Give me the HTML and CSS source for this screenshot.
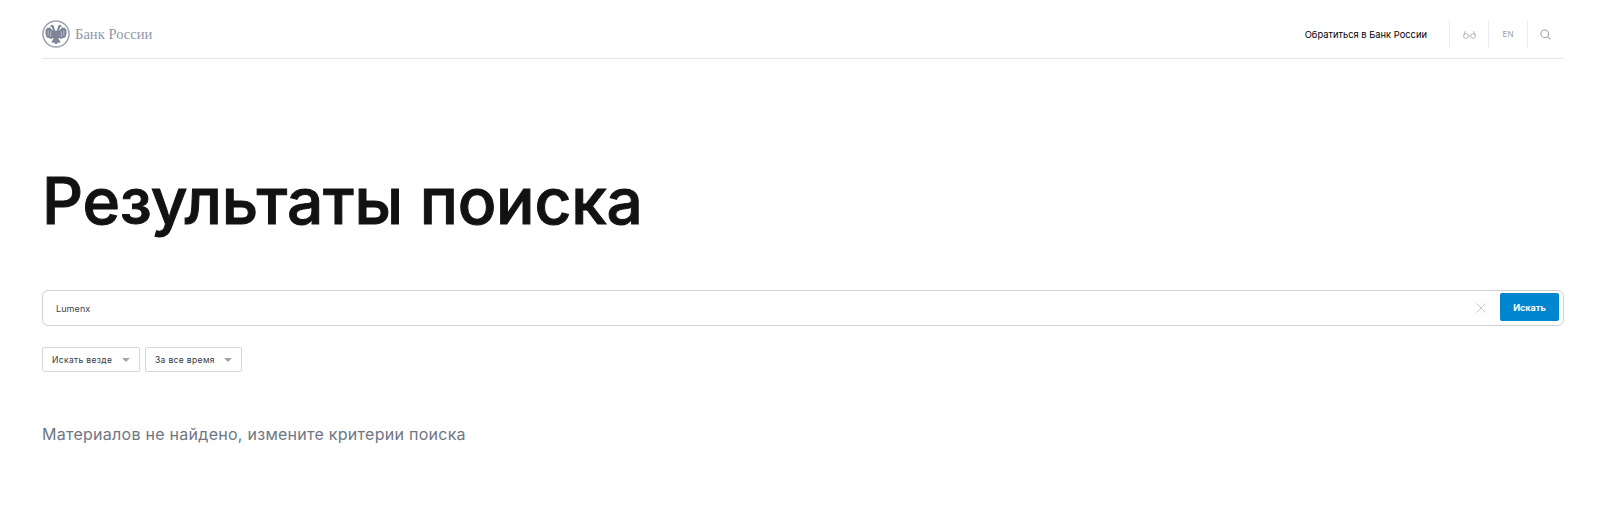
FILE: index.html
```html
<!DOCTYPE html>
<html lang="ru">

<head>
  <meta charset="UTF-8">
  <title>Результаты поиска - Банк России</title>
  <link rel="stylesheet" href="styles.css">
</head>

<body>
  <div class="container">
    <div class="header">
      <a class="logo" href="#">
        <svg class="logo-mark" viewBox="0 0 28 28" width="28" height="28">
          <circle cx="14" cy="14" r="13" fill="#fff" stroke="#a0a5b4" stroke-width="1.6"/>
          <g id="half">
            <path fill="#7f8599" d="M14 11L12.8 10 12.2 7 11.2 5H9.4L8 6.6 9.8 6.9 10.4 8.8 11 11 9.4 9.2 8 7.2 6 8 5.4 7.4 3.6 10 3.4 13.6 4.2 16.4 5.8 18H7.6L9 19.2 10.6 18 11.8 18.6 10.2 20.6 9.4 23 11.4 22.2 12.2 23.4 13 23 14 24.6Z"/>
            <path fill="none" stroke="#fff" stroke-width=".4" d="M6.2 10.4v5.4M8.6 11.4v5.4"/>
          </g>
          <use href="#half" transform="matrix(-1 0 0 1 28 0)"/>
        </svg>
        <span class="logo-text">Банк России</span>
      </a>
      <div class="header-nav">
        <a class="nav-link" href="#">Обратиться в Банк России</a>
        <div class="nav-item">
          <svg viewBox="0 0 13 9" width="13" height="9" fill="none" stroke="#a5a9b1" stroke-width=".8">
            <circle cx="3" cy="6" r="2.4"/>
            <circle cx="10" cy="6" r="2.4"/>
            <path d="M5.4 6h2.2M.7 5.4l1.7-4.4M12.3 5.4l-1.7-4.4"/>
          </svg>
        </div>
        <div class="nav-item nav-lang">EN</div>
        <div class="nav-item nav-last">
          <svg viewBox="0 0 12 12" width="11" height="11" fill="none" stroke="#9a9fa8" stroke-width="1.1">
            <circle cx="5.2" cy="5.2" r="4.2"/>
            <path d="M8.3 8.3l3 3"/>
          </svg>
        </div>
      </div>
    </div>

    <h1 class="page-title">Результаты поиска</h1>

    <div class="search-box">
      <span class="search-value">Lumenx</span>
      <svg class="search-clear" viewBox="0 0 10 10" width="10" height="10" fill="none" stroke="#c4c7cf" stroke-width="1">
        <path d="M.5.5l9 9M9.5.5l-9 9"/>
      </svg>
      <button class="search-btn">Искать</button>
    </div>

    <div class="filters">
      <div class="filter filter-where">Искать везде<span class="arrow"></span></div>
      <div class="filter filter-when">За все время<span class="arrow"></span></div>
    </div>

    <p class="empty">Материалов не найдено, измените критерии поиска</p>
  </div>
</body>

</html>
```

FILE: styles.css
```css
body {
  font-family: 'Inter', sans-serif;
  margin: 0;
  padding: 0;
  background-color: #fff;
  color: #121212;
}

a {
  color: inherit;
  text-decoration: none;
}

.container {
  margin: 0 36px 0 42px;
}

.header {
  display: flex;
  align-items: center;
  justify-content: space-between;
  box-sizing: border-box;
  height: 59px;
  padding-top: 10px;
  border-bottom: 1px solid #e4e5e8;
}

.logo {
  display: flex;
  align-items: center;
  gap: 5px;
}

.logo-text {
  font-family: 'Liberation Serif', serif;
  font-size: 14.6px;
  color: #8f96a8;
}

.header-nav {
  display: flex;
  align-items: center;
}

.nav-link {
  font-size: 9.35px;
  color: #000;
  margin-right: 22px;
}

.nav-item {
  display: flex;
  align-items: center;
  justify-content: center;
  box-sizing: border-box;
  width: 39px;
  height: 28px;
  border-left: 1px solid #ebecee;
}

.nav-last {
  width: 37px;
  padding-right: 2px;
}

.nav-lang {
  font-size: 8px;
  color: #9a9fa8;
}

.page-title {
  margin: 106px 0 0;
  font-size: 64px;
  line-height: 72px;
  font-weight: 500;
  letter-spacing: -0.2px;
  -webkit-text-stroke: 1px #121212;
}

.search-box {
  display: flex;
  align-items: center;
  height: 34px;
  margin-top: 53px;
  padding-left: 13px;
  padding-right: 4px;
  border: 1px solid #cfd1d8;
  border-radius: 6px;
}

.search-value {
  flex: 1;
  font-size: 9px;
  letter-spacing: 0.1px;
  color: #3a3f4a;
}

.search-clear {
  margin-right: 14px;
}

.search-btn {
  width: 59px;
  height: 28px;
  margin-bottom: 2px;
  border: 0;
  border-radius: 2px;
  background: #0086cf;
  color: #fff;
  font-family: inherit;
  font-size: 9px;
  font-weight: 700;
}

.filters {
  display: flex;
  gap: 5px;
  margin-top: 21px;
}

.filter {
  display: flex;
  align-items: center;
  justify-content: space-between;
  box-sizing: border-box;
  height: 25px;
  padding: 0 9px;
  border: 1px solid #d5d7dc;
  border-radius: 2px;
  font-size: 8.5px;
  letter-spacing: 0.35px;
  color: #333843;
}

.filter-where {
  width: 98px;
}

.filter-when {
  width: 97px;
}

.arrow {
  width: 0;
  height: 0;
  border-left: 4px solid transparent;
  border-right: 4px solid transparent;
  border-top: 4.5px solid #a0a4ad;
}

.empty {
  margin: 50px 0 0;
  font-size: 16px;
  line-height: 24px;
  letter-spacing: 0.27px;
  color: #6f7683;
}
```
